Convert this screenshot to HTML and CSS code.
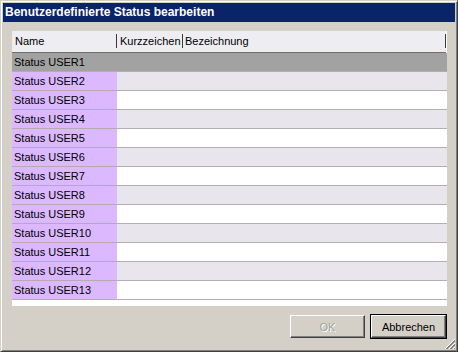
FILE: index.html
```html
<!DOCTYPE html>
<html lang="de">
<head>
    <meta charset="UTF-8">
    <link rel="stylesheet" href="styles.css">
</head>
<body>
    <div class="window">
        <div class="titlebar">Benutzerdefinierte Status bearbeiten</div>
        <div class="content">
            <div class="grid">
                <div class="grid-head">
                    <div class="hcell col-name">Name</div>
                    <div class="hcell col-short">Kurzzeichen</div>
                    <div class="hcell col-desc">Bezeichnung</div>
                </div>
                <div class="grid-body">
                    <div class="row selected"><div class="cell key">Status USER1</div><div class="cell"></div></div>
                    <div class="row alt"><div class="cell key">Status USER2</div><div class="cell"></div></div>
                    <div class="row"><div class="cell key">Status USER3</div><div class="cell"></div></div>
                    <div class="row alt"><div class="cell key">Status USER4</div><div class="cell"></div></div>
                    <div class="row"><div class="cell key">Status USER5</div><div class="cell"></div></div>
                    <div class="row alt"><div class="cell key">Status USER6</div><div class="cell"></div></div>
                    <div class="row"><div class="cell key">Status USER7</div><div class="cell"></div></div>
                    <div class="row alt"><div class="cell key">Status USER8</div><div class="cell"></div></div>
                    <div class="row"><div class="cell key">Status USER9</div><div class="cell"></div></div>
                    <div class="row alt"><div class="cell key">Status USER10</div><div class="cell"></div></div>
                    <div class="row"><div class="cell key">Status USER11</div><div class="cell"></div></div>
                    <div class="row alt"><div class="cell key">Status USER12</div><div class="cell"></div></div>
                    <div class="row"><div class="cell key">Status USER13</div><div class="cell"></div></div>
                    <div class="filler"></div>
                </div>
            </div>
            <div class="buttons">
                <button class="btn" disabled>OK</button>
                <button class="btn default">Abbrechen</button>
            </div>
        </div>
        <svg class="grip" width="12" height="12" viewBox="0 0 12 12">
            <path d="M11 1 L1 11 M11 5 L5 11 M11 9 L9 11" stroke="#ffffff" stroke-width="1"/>
            <path d="M11 2 L2 11 M11 3 L3 11 M11 6 L6 11 M11 7 L7 11 M11 10 L10 11" stroke="#808080" stroke-width="1"/>
        </svg>
    </div>
</body>
</html>
```

FILE: styles.css
```css
body {
    margin: 0;
    background: #d4d0c8;
    font-family: "Liberation Sans", Arial, sans-serif;
    font-size: 11px;
}
.window {
    position: relative;
    width: 458px;
    height: 352px;
    box-sizing: border-box;
    background: #d4d0c8;
    border-top: 1px solid #d4d0c8;
    border-left: 1px solid #d4d0c8;
    border-right: 1px solid #404040;
    border-bottom: 1px solid #404040;
    box-shadow: inset 1px 1px 0 #ffffff, inset -1px -1px 0 #808080;
    padding: 2px;
}
.titlebar {
    height: 19px;
    line-height: 19px;
    background: #0a246a;
    color: #ffffff;
    font-weight: bold;
    font-size: 12px;
    padding-left: 2px;
}
.content {
    padding: 9px 8px 0 9px;
}
.grid {
    width: 435px;
    background: #ffffff;
}
.grid-head {
    display: flex;
    height: 21px;
    background: #eeedf1;
    border-bottom: 1px solid #716f64;
    width: 434px;
}
.hcell {
    box-sizing: border-box;
    padding-left: 3px;
    line-height: 21px;
    color: #000000;
    position: relative;
}
.hcell::after {
    content: "";
    position: absolute;
    right: 0;
    top: 3px;
    bottom: 4px;
    width: 1px;
    background: #3a3a3a;
}
.col-name { width: 105px; }
.col-short { width: 66px; padding-left: 3px; }
.col-desc { flex: 1; padding-left: 2px; }
.row {
    display: flex;
    height: 18px;
    border-bottom: 1px solid #b0aeb4;
    background: #ffffff;
}
.row.alt { background: #e8e5ec; }
.row.selected { background: #a2a2a2; }
.cell {
    flex: 1;
    line-height: 18px;
}
.cell.key {
    flex: 0 0 105px;
    background: #dbb8ff;
    padding-left: 2px;
    box-sizing: border-box;
    color: #000000;
}
.row.selected .cell.key { background: #a2a2a2; }
.filler {
    height: 6px;
    background: #ffffff;
}
.buttons {
    display: flex;
    justify-content: flex-end;
    gap: 6px;
    margin-top: 9px;
    padding-right: 1px;
}
.btn {
    width: 75px;
    height: 23px;
    font-family: "Liberation Sans", Arial, sans-serif;
    font-size: 11px;
    background: #d4d0c8;
    border: 1px solid;
    border-color: #ffffff #404040 #404040 #ffffff;
    box-shadow: inset -1px -1px 0 #808080;
    padding: 0;
    color: #000000;
}
.btn:disabled {
    color: #a0a0a0;
    text-shadow: 1px 1px 0 #ffffff;
}
.btn.default {
    outline: 1px solid #000000;
}
.grip {
    position: absolute;
    right: 1px;
    bottom: 1px;
}
```
